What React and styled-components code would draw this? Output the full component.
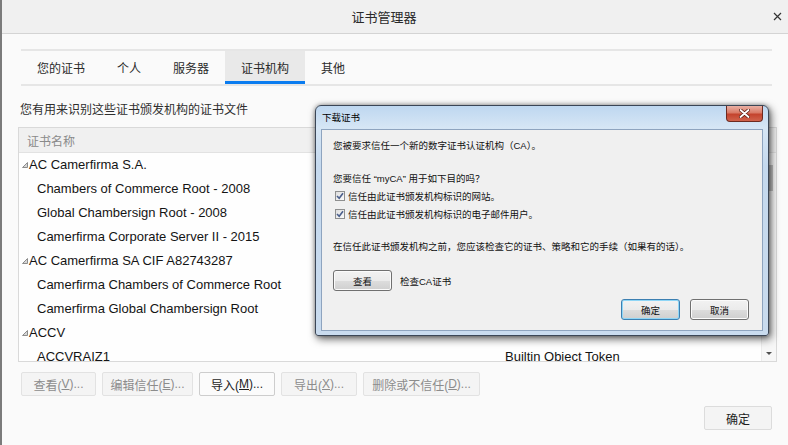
import React from 'react';
import styled, { createGlobalStyle } from 'styled-components';

// rows under the modal carry no token column: the modal hides it anyway
const rows = [
  { group: true, name: 'AC Camerfirma S.A.' },
  { name: 'Chambers of Commerce Root - 2008' },
  { name: 'Global Chambersign Root - 2008' },
  { name: 'Camerfirma Corporate Server II - 2015' },
  { group: true, name: 'AC Camerfirma SA CIF A82743287' },
  { name: 'Camerfirma Chambers of Commerce Root' },
  { name: 'Camerfirma Global Chambersign Root' },
  { group: true, name: 'ACCV' },
  { name: 'ACCVRAIZ1', token: 'Builtin Object Token' },
];

const tabs = ['您的证书', '个人', '服务器', '证书机构', '其他'];

const actions = [
  { label: '查看', key: 'V', w: 75 },
  { label: '编辑信任', key: 'E', w: 91 },
  { label: '导入', key: 'M', w: 76, enabled: true },
  { label: '导出', key: 'X', w: 76 },
  { label: '删除或不信任', key: 'D', w: 117 },
];

const GroupMark = () => (
  <svg width="6" height="6" viewBox="0 0 6 6">
    <polygon points="0.5,5.5 5.5,5.5 5.5,0.5" fill="#d6d6d6" stroke="#8c8c8c" strokeWidth="1" />
  </svg>
);

const CheckMark = () => (
  <svg width="8" height="8" viewBox="0 0 8 8">
    <path d="M1 4 L3.2 6.3 L7 1.2" fill="none" stroke="#4b5f8c" strokeWidth="1.6" />
  </svg>
);

const CertDialog = () => (
  <Dialog>
    <DlgTitle>
      <DlgCaption>下载证书</DlgCaption>
      <DlgClose>
        <svg width="11" height="9" viewBox="0 0 11 9">
          <path d="M1.5 1 L9.5 8 M9.5 1 L1.5 8" stroke="#5a1c12" strokeWidth="3.4" strokeLinecap="round" />
          <path d="M1.5 1 L9.5 8 M9.5 1 L1.5 8" stroke="#ffffff" strokeWidth="1.8" strokeLinecap="round" />
        </svg>
      </DlgClose>
    </DlgTitle>
    <DlgClient>
      <DlgLine>您被要求信任一个新的数字证书认证机构（CA）。</DlgLine>
      <DlgLine $mt={19}>您要信任 “myCA” 用于如下目的吗？</DlgLine>
      <CheckRow $mt={1}>
        <CheckBox><CheckMark /></CheckBox>
        信任由此证书颁发机构标识的网站。
      </CheckRow>
      <CheckRow>
        <CheckBox><CheckMark /></CheckBox>
        信任由此证书颁发机构标识的电子邮件用户。
      </CheckRow>
      <DlgLine $mt={17}>在信任此证书颁发机构之前，您应该检查它的证书、策略和它的手续（如果有的话）。</DlgLine>
      <ViewRow>
        <WinButton>查看</WinButton>
        <span>检查CA证书</span>
      </ViewRow>
      <DlgFooter>
        <WinButton $focused>确定</WinButton>
        <WinButton>取消</WinButton>
      </DlgFooter>
    </DlgClient>
  </Dialog>
);

const App = () => (
  <>
    <GlobalStyle />
    <Window>
      <TitleBar>
        <Title>证书管理器</Title>
        <CloseBox>
          <svg width="9" height="9" viewBox="0 0 9 9">
            <path d="M1 1 L8 8 M8 1 L1 8" stroke="#333" strokeWidth="1.2" />
          </svg>
        </CloseBox>
      </TitleBar>
      <Body>
        <TabBar>
          {tabs.map(t => (
            <Tab key={t} $active={t === '证书机构'}>{t}</Tab>
          ))}
        </TabBar>
        <Hint>您有用来识别这些证书颁发机构的证书文件</Hint>
        <List>
          <ListHeader>证书名称</ListHeader>
          <ListBody>
            <Rows>
              {rows.map(r => (
                <Row key={r.name}>
                  <NameCell $group={r.group}>
                    {r.group && <GroupMark />}
                    {r.name}
                  </NameCell>
                  <span>{r.token}</span>
                </Row>
              ))}
            </Rows>
            <ScrollTrack>
              <Thumb />
              <ArrowDown />
            </ScrollTrack>
          </ListBody>
        </List>
        <Actions>
          {actions.map(a => (
            <ActionButton key={a.key} $w={a.w} $enabled={a.enabled}>
              {a.label}(<u>{a.key}</u>)...
            </ActionButton>
          ))}
        </Actions>
        <Footer>
          <OkButton>确定</OkButton>
        </Footer>
      </Body>
      <CertDialog />
    </Window>
  </>
);

export default App;

const GlobalStyle = createGlobalStyle`
  html, body {
    margin: 0;
    padding: 0;
    background: #fafafa;
  }
  body {
    font-family: "Liberation Sans", "Noto Sans CJK SC", sans-serif;
    color: #1c1c1c;
  }
`;

const Window = styled.div`
  position: relative;
  width: 788px;
  height: 445px;
  box-sizing: border-box;
  border-left: 2px solid #7b7b7b;
  background: #fafafa;
  display: flex;
  flex-direction: column;
  overflow: hidden;
  font-size: 12px;
`;

const TitleBar = styled.div`
  height: 33px;
  flex-shrink: 0;
  display: grid;
  grid-template-columns: 1fr 22px;
  align-items: center;
  background: #f0f0f0;
  border-bottom: 1px solid #d4d4d4;
`;

const Title = styled.div`
  text-align: center;
  font-size: 13px;
  color: #2a2a2a;
`;

const CloseBox = styled.div`
  display: flex;
  justify-content: center;
  align-items: center;
`;

const Body = styled.div`
  display: flex;
  flex-direction: column;
  padding: 15px 11px 0 16px;
`;

const TabBar = styled.div`
  display: flex;
  margin: 0 5px 0 3px;
  height: 33px;
  border-top: 2px solid #e6e6e6;
  border-bottom: 2px solid #e6e6e6;
`;

const Tab = styled.div`
  display: flex;
  align-items: center;
  padding: 0 16px;
  color: #2b2b2b;
  background: ${p => (p.$active ? '#e9e9e9' : 'transparent')};
  box-shadow: ${p => (p.$active ? 'inset 0 -3px 0 #0a7cf0' : 'none')};
`;

const Hint = styled.div`
  margin: 16px 0 0 2px;
  line-height: 16px;
  color: #2e2e2e;
`;

const List = styled.div`
  margin-top: 9px;
  height: 235px;
  box-sizing: border-box;
  border: 1px solid #d9d9d9;
  background: #fefefe;
  display: flex;
  flex-direction: column;
  overflow: hidden;
`;

const ListHeader = styled.div`
  height: 24px;
  flex-shrink: 0;
  display: flex;
  align-items: center;
  padding-left: 8px;
  background: #f0f0f0;
  border-bottom: 1px solid #e2e2e2;
  color: #8a8a8a;
`;

const ListBody = styled.div`
  flex: 1;
  display: flex;
  min-height: 0;
`;

const Rows = styled.div`
  flex: 1;
  overflow: hidden;
`;

const Row = styled.div`
  height: 24px;
  box-sizing: border-box;
  padding-bottom: 1px;
  display: grid;
  grid-template-columns: 486px 1fr;
  align-items: center;
  font-size: 13px;
  color: #141414;
`;

const NameCell = styled.div`
  display: flex;
  align-items: center;
  gap: 1px;
  padding-left: ${p => (p.$group ? '3px' : '18px')};
  white-space: nowrap;
`;

const ScrollTrack = styled.div`
  width: 14px;
  display: flex;
  flex-direction: column;
  justify-content: space-between;
  align-items: center;
  background: #f7f7f7;
  border-left: 1px solid #ececec;
`;

const Thumb = styled.div`
  width: 8px;
  height: 26px;
  margin-top: 12px;
  background: #c4c4c4;
`;

const ArrowDown = styled.div`
  width: 0;
  height: 0;
  margin-bottom: 6px;
  border-left: 3px solid transparent;
  border-right: 3px solid transparent;
  border-top: 3px solid #505050;
`;

const Actions = styled.div`
  display: flex;
  gap: 6px;
  margin: 10px 0 0 3px;
`;

const ActionButton = styled.div`
  width: ${p => p.$w}px;
  height: 24px;
  box-sizing: border-box;
  display: flex;
  align-items: center;
  justify-content: center;
  border-radius: 2px;
  border: 1px solid ${p => (p.$enabled ? '#cdcdcd' : '#e2e2e2')};
  background: ${p => (p.$enabled ? '#fbfbfb' : '#f4f4f4')};
  color: ${p => (p.$enabled ? '#1e1e1e' : '#8c8c8c')};
  white-space: nowrap;

  u {
    text-underline-offset: 1px;
  }
`;

const Footer = styled.div`
  display: flex;
  justify-content: flex-end;
  margin: 10px 5px 0 0;
`;

const OkButton = styled.div`
  width: 68px;
  height: 24px;
  box-sizing: border-box;
  display: flex;
  align-items: center;
  justify-content: center;
  border-radius: 2px;
  border: 1px solid #dcdcdc;
  background: #f4f4f4;
  color: #1e1e1e;
`;

const Dialog = styled.div`
  position: absolute;
  left: 313px;
  top: 105px;
  width: 454px;
  height: 231px;
  box-sizing: border-box;
  display: flex;
  flex-direction: column;
  padding: 0 5px 5px 5px;
  border: 1px solid #3b4656;
  border-radius: 6px 6px 3px 3px;
  background: linear-gradient(180deg, #bed7f0 0px, #d6e6f5 22px, #c5d9ee 60px, #c9dbee 100%);
  box-shadow: 2px 3px 9px rgba(0, 0, 0, 0.6), 0 0 4px rgba(0, 0, 0, 0.35);
  font-size: 9.5px;
  color: #111;
`;

const DlgTitle = styled.div`
  height: 23px;
  flex-shrink: 0;
  display: flex;
  justify-content: space-between;
  align-items: flex-start;
`;

const DlgCaption = styled.div`
  line-height: 23px;
  padding-left: 1px;
  font-size: 9.5px;
  color: #000;
`;

const DlgClose = styled.div`
  width: 37px;
  height: 16px;
  box-sizing: border-box;
  display: flex;
  align-items: center;
  justify-content: center;
  border: 1px solid #6d2a20;
  border-top: none;
  border-radius: 0 0 4px 4px;
  background: linear-gradient(180deg, #eab0a4 0%, #d97a66 45%, #c4432d 55%, #d0634c 100%);
`;

const DlgClient = styled.div`
  flex: 1;
  display: flex;
  flex-direction: column;
  padding: 9px 12px 10px 11px;
  border: 1px solid #8ea4bf;
  background: #f0f0f0;
`;

const DlgLine = styled.div`
  line-height: 14px;
  margin-top: ${p => p.$mt || 0}px;
  white-space: nowrap;
`;

const CheckRow = styled.div`
  height: 18px;
  display: flex;
  align-items: center;
  gap: 3px;
  padding-left: 2px;
  margin-top: ${p => p.$mt || 0}px;
`;

const CheckBox = styled.div`
  width: 10px;
  height: 10px;
  box-sizing: border-box;
  display: flex;
  align-items: center;
  justify-content: center;
  border: 1px solid #8e8f8f;
  background: linear-gradient(135deg, #dedede, #fbfbfb);
`;

const ViewRow = styled.div`
  display: flex;
  align-items: center;
  gap: 8px;
  margin-top: 16px;
`;

const WinButton = styled.div`
  width: 59px;
  height: 21px;
  box-sizing: border-box;
  display: flex;
  align-items: center;
  justify-content: center;
  border-radius: 3px;
  border: 1px solid ${p => (p.$focused ? '#3c7fb1' : '#707070')};
  background: linear-gradient(180deg, #f2f2f2 0%, #ebebeb 50%, #dddddd 51%, #cfcfcf 100%);
  box-shadow: inset 0 0 0 1px ${p => (p.$focused ? '#8fd6f6' : '#fbfbfb')};
  color: #111;
`;

const DlgFooter = styled.div`
  display: flex;
  justify-content: flex-end;
  gap: 10px;
  margin-top: 8px;
  padding-right: 1px;
`;
